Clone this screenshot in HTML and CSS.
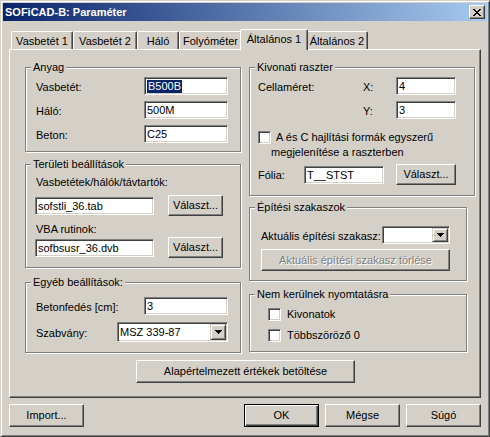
FILE: index.html
```html
<!DOCTYPE html>
<html lang="hu">
<head>
<meta charset="utf-8">
<title>SOFiCAD-B: Paraméter</title>
<link rel="stylesheet" href="styles.css">
</head>
<body>
<div class="window">
  <div class="titlebar">
    <span class="title">SOFiCAD-B: Paraméter</span>
    <span class="close"><svg width="8" height="7" viewBox="0 0 8 7" shape-rendering="crispEdges"><path fill="#000" d="M0 0h2v1H0zM6 0h2v1H6zM1 1h2v1H1zM5 1h2v1H5zM2 2h4v1H2zM3 3h2v1H3zM2 4h4v1H2zM1 5h2v1H1zM5 5h2v1H5zM0 6h2v1H0zM6 6h2v1H6z"/></svg></span>
  </div>
  <div class="client">
    <div class="tabs">
      <div class="tab t1">Vasbetét 1</div>
      <div class="tab t2">Vasbetét 2</div>
      <div class="tab t3">Háló</div>
      <div class="tab t4">Folyóméter</div>
      <div class="tab t5 active">Általános 1</div>
      <div class="tab t6">Általános 2</div>
    </div>
    <div class="panel">
      <div class="cols">
        <div class="col col-left">
          <div class="group g-anyag">
            <div class="gtitle">Anyag</div>
            <div class="frow first"><span class="lbl">Vasbetét:</span><div class="field w84"><span class="sel">B500B</span></div></div>
            <div class="frow"><span class="lbl">Háló:</span><div class="field w84">500M</div></div>
            <div class="frow"><span class="lbl">Beton:</span><div class="field w84">C25</div></div>
          </div>
          <div class="group g-terul">
            <div class="gtitle">Területi beállítások</div>
            <div class="t-lbl">Vasbetétek/hálók/távtartók:</div>
            <div class="t-row"><div class="field w119">sofstli_36.tab</div><div class="btn w55">Választ...</div></div>
            <div class="t-lbl t-lbl2">VBA rutinok:</div>
            <div class="t-row t-row2"><div class="field w119">sofbsusr_36.dvb</div><div class="btn w55">Választ...</div></div>
          </div>
          <div class="group g-egyeb">
            <div class="gtitle">Egyéb beállítások:</div>
            <div class="frow e1"><span class="lbl">Betonfedés [cm]:</span><div class="field w84">3</div></div>
            <div class="frow e2"><span class="lbl">Szabvány:</span>
              <div class="combo w111"><span class="combo-text">MSZ 339-87</span><span class="combo-btn"><svg width="7" height="4" viewBox="0 0 7 4" shape-rendering="crispEdges"><path fill="#000" d="M0 0h7v1H0zM1 1h5v1H1zM2 2h3v1H2zM3 3h1v1H3z"/></svg></span></div>
            </div>
          </div>
        </div>
        <div class="col col-right">
          <div class="group g-kiv">
            <div class="gtitle">Kivonati raszter</div>
            <div class="xyrow first"><span class="lbl">Cellaméret:</span><span class="lbl">X:</span><div class="field w60">4</div></div>
            <div class="xyrow"><span class="lbl"></span><span class="lbl">Y:</span><div class="field w60">3</div></div>
            <div class="chkrow"><span class="chk"></span><span class="chktext">A és C hajlítási formák egyszerű<br>megjelenítése a raszterben</span></div>
            <div class="folia-row"><span class="lbl folia-lbl">Fólia:</span><div class="field w80">T__STST</div><div class="btn w60 folia-btn">Választ...</div></div>
          </div>
          <div class="group g-epit">
            <div class="gtitle">Építési szakaszok</div>
            <div class="ep-row"><span class="lbl">Aktuális építési szakasz:</span>
              <div class="combo w68 h18"><span class="combo-text"></span><span class="combo-btn"><svg width="7" height="4" viewBox="0 0 7 4" shape-rendering="crispEdges"><path fill="#000" d="M0 0h7v1H0zM1 1h5v1H1zM2 2h3v1H2zM3 3h1v1H3z"/></svg></span></div>
            </div>
            <div class="btn disabled ep-btn">Aktuális építési szakasz törlése</div>
          </div>
          <div class="group g-nem">
            <div class="gtitle">Nem kerülnek nyomtatásra</div>
            <div class="nem-row first"><span class="chk"></span><span class="nem-text">Kivonatok</span></div>
            <div class="nem-row"><span class="chk"></span><span class="nem-text">Többszöröző 0</span></div>
          </div>
        </div>
      </div>
      <div class="defrow"><div class="btn w219">Alapértelmezett értékek betöltése</div></div>
    </div>
    <div class="footer">
      <div class="btn w75">Import...</div>
      <div class="btn w75 default ok">OK</div>
      <div class="btn w75">Mégse</div>
      <div class="btn w75">Súgó</div>
    </div>
  </div>
</div>
</body>
</html>
```

FILE: styles.css
```css
* { box-sizing: border-box; }
html, body { margin: 0; padding: 0; }
body {
  background: #D4D0C8;
  font-family: "Liberation Sans", Arial, sans-serif;
  font-size: 11px;
  line-height: 13px;
  color: #000;
}

.window {
  width: 490px;
  height: 437px;
  border: 1px solid;
  border-color: #D4D0C8 #404040 #404040 #D4D0C8;
  box-shadow: inset 1px 1px #fff, inset -1px -1px #808080;
  padding: 2px;
  background: #D4D0C8;
}

.titlebar {
  height: 18px;
  display: flex;
  align-items: center;
  justify-content: space-between;
  padding: 0 2px;
  background: linear-gradient(to right, #0A246A, #A6CAF0);
  color: #fff;
  font-weight: bold;
}

.close {
  width: 16px;
  height: 14px;
  background: #D4D0C8;
  border: 1px solid;
  border-color: #fff #404040 #404040 #fff;
  box-shadow: inset -1px -1px #808080;
  display: flex;
  align-items: center;
  justify-content: center;
}
.close svg { display: block; }

.client { padding: 8px 6px 0; }

/* tabs */
.tabs {
  display: flex;
  align-items: flex-end;
  height: 20px;
  padding-left: 2px;
}
.tab {
  height: 18px;
  border: 1px solid;
  border-bottom: none;
  border-color: #fff #404040 transparent #fff;
  border-radius: 2px 2px 0 0;
  box-shadow: inset -1px 0 #808080;
  display: flex;
  align-items: center;
  justify-content: center;
  padding-top: 1px;
  background: #D4D0C8;
}
.t1 { width: 62px; }
.t2 { width: 64px; }
.t3 { width: 42px; }
.t4 { width: 63px; }
.t5 { width: 64px; }
.t6 { width: 62px; }
.tab.active {
  width: 68px;
  height: 21px;
  margin: 0 -2px -1px;
  padding-top: 0;
  padding-bottom: 1px;
  position: relative;
  z-index: 1;
}

/* panel */
.panel {
  height: 349px;
  border: 1px solid;
  border-color: #fff #404040 #404040 #fff;
  box-shadow: inset -1px -1px #808080;
  padding: 17px 0 0 15px;
}
.cols { display: flex; align-items: flex-start; }
.col { display: flex; flex-direction: column; }
.col-left { width: 216px; }
.col-right { width: 226px; margin-left: 8px; }

/* group boxes */
.group {
  --pl: 10px;
  border: 1px solid #808080;
  box-shadow: inset 1px 1px #fff, 1px 1px #fff;
  padding-left: var(--pl);
}
.gtitle {
  display: table;
  margin: -7px 0 0 calc(5px - var(--pl));
  padding: 0 2px;
  line-height: 13px;
  background: #D4D0C8;
}

.g-anyag { height: 85px; padding-right: 12px; }
.g-terul { --pl: 9px; height: 104px; margin-top: 12px; }
.g-egyeb { height: 71px; margin-top: 14px; padding-right: 12px; }
.g-kiv { --pl: 8px; height: 129px; }
.g-epit { --pl: 11px; width: 218px; height: 74px; margin-top: 11px; padding-right: 16px; }
.g-nem { --pl: 18px; width: 218px; height: 58px; margin-top: 13px; }

.lbl { padding-top: 2px; }

.frow {
  display: flex;
  justify-content: space-between;
  align-items: center;
  height: 18px;
  margin-top: 6px;
}
.frow.first { margin-top: 3px; }
.frow.e1 { margin-top: 8px; }
.frow.e2 { margin-top: 7px; height: 20px; }

/* fields */
.field {
  height: 18px;
  background: #fff;
  border: 1px solid;
  border-color: #808080 #fff #fff #808080;
  box-shadow: inset 1px 1px #404040, inset -1px -1px #D4D0C8;
  padding: 1px 1px 0 2px;
  display: flex;
  align-items: center;
  white-space: nowrap;
  overflow: hidden;
}
.sel {
  background: #0A246A;
  color: #fff;
  padding: 0 1px;
  line-height: 13px;
}
.w55 { width: 55px; }
.w60 { width: 60px; }
.w68 { width: 68px; }
.w75 { width: 75px; }
.w80 { width: 80px; }
.w84 { width: 84px; }
.w111 { width: 111px; }
.w119 { width: 119px; }
.w219 { width: 219px; }

/* combo */
.combo {
  height: 20px;
  background: #fff;
  border: 1px solid;
  border-color: #808080 #fff #fff #808080;
  box-shadow: inset 1px 1px #404040, inset -1px -1px #D4D0C8;
  padding: 1px;
  display: flex;
  align-items: stretch;
}
.combo.h18 { height: 18px; }
.combo-text {
  flex: 1;
  display: flex;
  align-items: center;
  padding: 1px 0 0 1px;
  white-space: nowrap;
}
.combo-btn {
  width: 16px;
  background: #D4D0C8;
  border: 1px solid;
  border-color: #D4D0C8 #404040 #404040 #D4D0C8;
  box-shadow: inset 1px 1px #fff, inset -1px -1px #808080;
  display: flex;
  align-items: center;
  justify-content: center;
}
.combo-btn svg { display: block; }

/* buttons */
.btn {
  height: 23px;
  background: #D4D0C8;
  border: 1px solid;
  border-color: #fff #404040 #404040 #fff;
  box-shadow: inset -1px -1px #808080;
  display: flex;
  align-items: center;
  justify-content: center;
  white-space: nowrap;
}
.btn.default {
  border: 1px solid #000;
  box-shadow: inset 1px 1px #fff, inset -1px -1px #404040, inset -2px -2px #808080;
}
.btn.disabled {
  color: #808080;
  text-shadow: 1px 1px #fff;
}

/* Területi */
.t-lbl { margin-top: 5px; padding-left: 1px; }
.t-lbl2 { margin-top: 7px; }
.t-row {
  display: flex;
  align-items: center;
  gap: 14px;
  height: 21px;
  margin-top: 6px;
}
.t-row .btn { height: 21px; }
.t-row2 { margin-top: 1px; }

/* Kivonati */
.xyrow {
  display: grid;
  grid-template-columns: 105px 33px 60px;
  align-items: center;
  height: 18px;
  margin-top: 6px;
}
.xyrow.first { margin-top: 3px; }
.chkrow {
  display: flex;
  align-items: flex-start;
  margin-top: 11px;
}
.chkrow .chk { margin-top: 1px; }
.chktext { line-height: 15px; text-indent: 5px; }
.folia-row {
  display: flex;
  align-items: center;
  height: 21px;
  margin-top: 4px;
}
.folia-lbl { width: 46px; }
.folia-btn { margin-left: 12px; height: 21px; }

/* checkbox */
.chk {
  width: 13px;
  height: 13px;
  flex: none;
  background: #fff;
  border: 1px solid;
  border-color: #808080 #fff #fff #808080;
  box-shadow: inset 1px 1px #404040, inset -1px -1px #D4D0C8;
}

/* Építési */
.ep-row {
  display: flex;
  justify-content: space-between;
  align-items: center;
  height: 18px;
  margin-top: 12px;
}
.ep-btn { width: 189px; height: 22px; margin-top: 5px; }

/* Nem kerülnek */
.nem-row {
  display: flex;
  align-items: center;
  height: 13px;
  margin-top: 8px;
}
.nem-row.first { margin-top: 7px; }
.nem-text { margin-left: 6px; }

/* bottom */
.defrow { margin-top: 7px; margin-left: 111px; }
.footer {
  display: flex;
  gap: 6px;
  margin-top: 6px;
}
.footer .ok { margin-left: auto; }
```
